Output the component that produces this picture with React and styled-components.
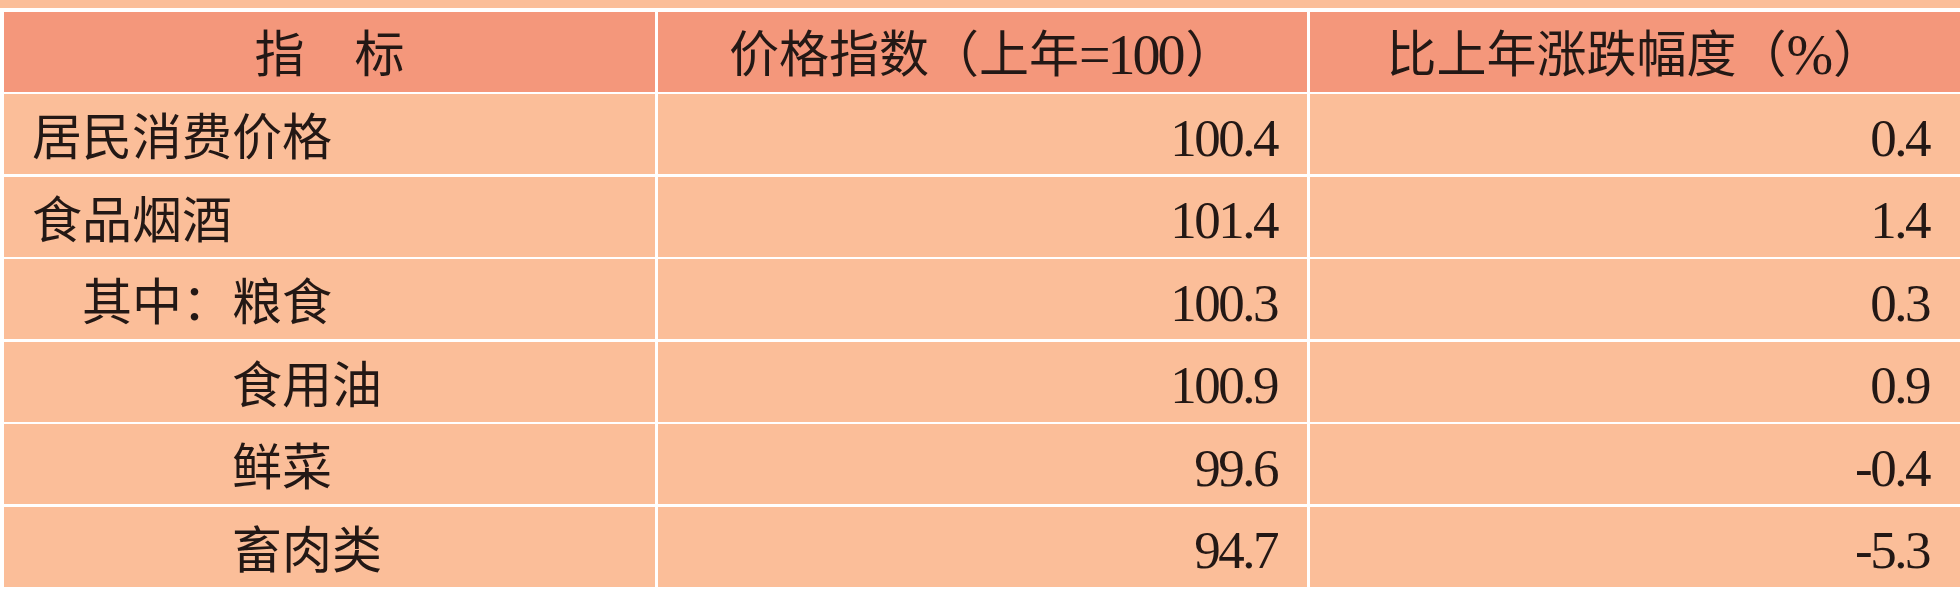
import React from 'react'
import styled, { createGlobalStyle } from 'styled-components'

const GlobalStyle = createGlobalStyle`
    html, body {
        margin: 0;
        padding: 0;
        background: #ffffff;
    }
    body {
        width: 1960px;
        height: 590px;
        overflow: hidden;
        font-family: "Liberation Serif", "Noto Sans CJK SC", serif;
        color: #231815;
    }
`

// 价格指数数据
const rows = [
    { name: '居民消费价格', level: 0, index: '100.4', change: '0.4' },
    { name: '食品烟酒', level: 0, index: '101.4', change: '1.4' },
    { name: '其中：粮食', level: 1, index: '100.3', change: '0.3' },
    { name: '食用油', level: 4, index: '100.9', change: '0.9' },
    { name: '鲜菜', level: 4, index: '99.6', change: '-0.4' },
    { name: '畜肉类', level: 4, index: '94.7', change: '-5.3' },
]

const App = () => {
    return (
        <>
            <GlobalStyle />
            <Page>
                <PrevStrip />
                <Table>
                    <HeadCell>指　标</HeadCell>
                    <HeadCell>价格指数（上年<Latin>=100</Latin>）</HeadCell>
                    <HeadCell>比上年涨跌幅度（<Latin>%</Latin>）</HeadCell>
                    {
                        rows.map((el, i) => (
                            <React.Fragment key={i}>
                                <NameCell level={el.level}>{el.name}</NameCell>
                                <NumCell>{el.index}</NumCell>
                                <NumCell last>{el.change}</NumCell>
                            </React.Fragment>
                        ))
                    }
                </Table>
            </Page>
        </>
    )
}

export default App

const Page = styled.div`
    display: flex;
    flex-direction: column;
    gap: 4px;
    width: 1960px;
`

const PrevStrip = styled.div`
    height: 8px;
    background: #fbbe99;
`

const Table = styled.div`
    display: grid;
    grid-template-columns: 651px 649.5px 1fr;
    grid-template-rows: 79.5px repeat(6, 80px);
    gap: 2.5px;
    margin-left: 4px;
`

const Cell = styled.div`
    display: flex;
    align-items: center;
    box-sizing: border-box;
    background: #fbbe99;
    font-size: 50px;
    line-height: 1;
    white-space: nowrap;
`

const HeadCell = styled(Cell)`
    justify-content: center;
    background: #f4977b;
    padding-top: 6px;
`

const Latin = styled.span`
    font-size: 56px;
    letter-spacing: -3px;
    margin-right: 3px;
`

const NameCell = styled(Cell)`
    padding-left: ${p => 28 + p.level * 50}px;
    padding-top: 8px;
`

const NumCell = styled(Cell)`
    justify-content: flex-end;
    padding-right: ${p => (p.last ? 31 : 30)}px;
    padding-top: 8px;
    font-size: 53px;
    letter-spacing: -2.5px;
`
